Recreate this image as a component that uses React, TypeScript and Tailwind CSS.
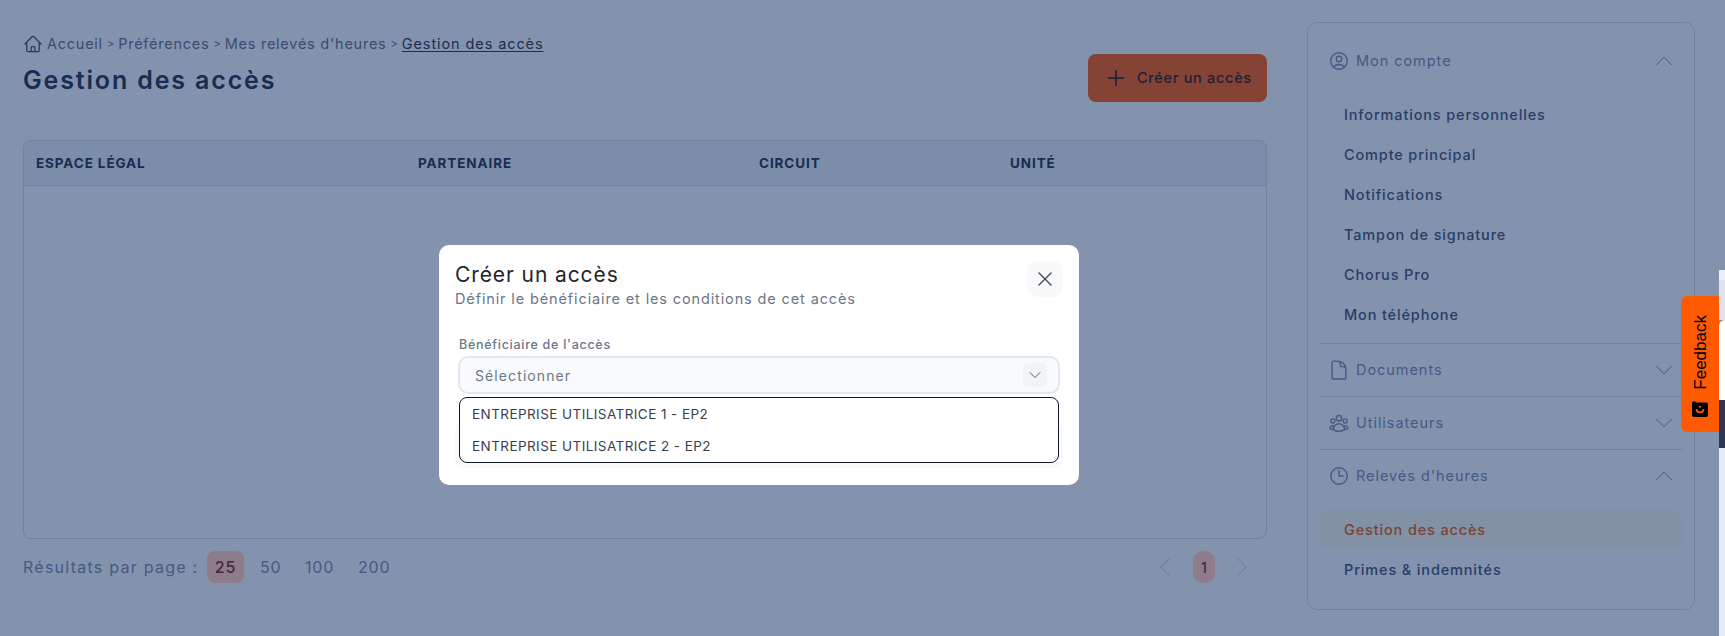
import React from "react";
import {
  HiOutlineHome,
  HiOutlineUserCircle,
  HiOutlineDocument,
  HiOutlineUserGroup,
  HiOutlineClock,
  HiOutlineChevronUp,
  HiOutlineChevronDown,
  HiOutlineChevronLeft,
  HiOutlineChevronRight,
  HiOutlinePlus,
  HiOutlineXMark,
} from "react-icons/hi2";

function Section({
  icon,
  title,
  open,
  items,
  last,
}: {
  icon: React.ReactNode;
  title: string;
  open: boolean;
  items?: { label: string; active?: boolean }[];
  last?: boolean;
}) {
  return (
    <div className={last ? "" : "border-b border-[#71829f]"}>
      <div className="flex h-[52px] items-center pr-[6px] pl-[8px] text-[#465a7f]">
        <span className="flex w-[22px] justify-center text-[22px]">{icon}</span>
        <span className="ml-[6px] text-[14.5px] tracking-[0.95px]">{title}</span>
        <span className="ml-auto">
          {open ? (
            <HiOutlineChevronUp size={24} strokeWidth={1} />
          ) : (
            <HiOutlineChevronDown size={24} strokeWidth={1} />
          )}
        </span>
      </div>
      {open && (
        <div className="pt-2 pb-2">
          {items!.map((it) => (
            <div
              key={it.label}
              className={
                it.active
                  ? "flex h-10 items-center rounded-[8px] bg-[#8291a5] pb-[1px] pl-6 text-[14.5px] font-medium tracking-[0.85px] text-[#7a4336]"
                  : "flex h-10 items-center pb-[1px] pl-6 text-[14.5px] font-medium tracking-[0.85px] text-[#2a3d64]"
              }
            >
              {it.label}
            </div>
          ))}
        </div>
      )}
    </div>
  );
}

function FeedbackLogo() {
  return (
    <svg width="16" height="16" viewBox="0 0 16 16">
      <path d="M0 1 L3 0 L3.5 1.5 H14 a2 2 0 0 1 2 2 V14 a2 2 0 0 1 -2 2 H2 a2 2 0 0 1 -2 -2 Z" fill="#000" />
      <path d="M4.5 8 C4.5 12.5 11.5 12.5 11.5 8" fill="none" stroke="#ff5a00" strokeWidth="1.8" />
      <rect x="7" y="5" width="2" height="1.5" fill="#ff5a00" />
    </svg>
  );
}

function Sep() {
  return <span className="mx-[4px] text-[11px] tracking-normal">&gt;</span>;
}

export default function App() {
  return (
    <div
      className="relative flex h-[636px] w-[1725px] overflow-hidden bg-[#8393ae]"
      style={{ fontFamily: "Inter, 'Noto Sans', sans-serif" }}
    >
      <div className="ml-[23px] flex w-[1244px] flex-col">
        <div className="flex h-[102px] justify-between">
          <div className="pt-[34px]">
            <div className="flex h-5 items-center text-[14.5px] tracking-[0.75px] text-[#3b4b6c]">
              <HiOutlineHome size={20} className="mr-[4px] text-[#2a3a5c]" />
              <span>Accueil</span>
              <Sep />
              <span>Préférences</span>
              <Sep />
              <span>Mes relevés d'heures</span>
              <Sep />
              <span className="tracking-[0.9px] text-[#1c2d50] underline underline-offset-2">Gestion des accès</span>
            </div>
            <h1 className="mt-[10px] h-8 text-[25px] leading-8 font-semibold tracking-[1.85px] text-[#1a2c4f]">
              Gestion des accès
            </h1>
          </div>
          <button className="mt-[54px] flex h-12 w-[179px] items-center rounded-[8px] bg-[#854335] pl-[16px] text-[14.5px] font-medium tracking-[0.7px] text-[#1a2038]">
            <HiOutlinePlus size={24} strokeWidth={1.5} />
            <span className="ml-[9px]">Créer un accès</span>
          </button>
        </div>

        <div className="mt-[38px] h-[399px] overflow-hidden rounded-[8px] border border-[#71829f]">
          <div className="flex h-[45px] items-center border-b border-[#71829f] bg-[#7b8da9] pl-3 text-[13.5px] font-bold tracking-[0.9px] text-[#1a2c4f]">
            <div className="w-[382px]">ESPACE LÉGAL</div>
            <div className="w-[341px]">PARTENAIRE</div>
            <div className="w-[251px]">CIRCUIT</div>
            <div>UNITÉ</div>
          </div>
        </div>

        <div className="mt-3 flex h-8 items-center text-[16px] tracking-[1.25px] text-[#465a7f]">
          <span className="w-[184px]">Résultats par page :</span>
          <span className="flex h-8 w-[37px] items-center justify-center rounded-[8px] bg-[#8f7c8b] font-medium tracking-[0.8px] text-[#43283a]">25</span>
          <span className="ml-[16px] w-[20px] tracking-[0.8px]">50</span>
          <span className="ml-[25px] w-[27px] tracking-[0.8px]">100</span>
          <span className="ml-[26px] w-[30px] tracking-[0.8px]">200</span>
          <div className="ml-auto flex items-center text-[#71829f]">
            <HiOutlineChevronLeft size={26} strokeWidth={1} />
            <span className="ml-[15px] flex h-8 w-[22px] items-center justify-center rounded-[10px] bg-[#8f7c8b] text-[14px] font-medium tracking-normal text-[#3f2a3a]">1</span>
            <span className="ml-[14px]"><HiOutlineChevronRight size={26} strokeWidth={1} /></span>
            <span className="w-[12px]" />
          </div>
        </div>
      </div>

      <div className="mt-[22px] ml-[40px] h-[588px] w-[388px] rounded-[10px] border border-[#71829f] pt-3 pr-[12px] pl-[12px]">
        <Section
          icon={<HiOutlineUserCircle />}
          title="Mon compte"
          open
          items={[
            { label: "Informations personnelles" },
            { label: "Compte principal" },
            { label: "Notifications" },
            { label: "Tampon de signature" },
            { label: "Chorus Pro" },
            { label: "Mon téléphone" },
          ]}
        />
        <Section icon={<HiOutlineDocument />} title="Documents" open={false} />
        <Section icon={<HiOutlineUserGroup />} title="Utilisateurs" open={false} />
        <Section
          icon={<HiOutlineClock />}
          title="Relevés d'heures"
          open
          last
          items={[{ label: "Gestion des accès", active: true }, { label: "Primes & indemnités" }]}
        />
      </div>

      <div className="absolute top-[270px] right-0 flex h-[366px] w-[6px] flex-col">
        <div className="h-[10px] bg-[#eef0f3]" />
        <div className="h-[40px] bg-[#dfe4ec]" />
        <div className="h-[80px] rounded-tl-[6px] bg-white" />
        <div className="h-[48px] bg-[#2e3653]" />
        <div className="flex-1 bg-[#e8ecf5]" />
      </div>

      <div className="absolute top-[296px] left-[1681px] flex h-[136px] w-[38px] flex-col items-center rounded-l-[6px] bg-[#ff5a00] pt-[19px]">
        <span
          className="rotate-180 text-[17px] leading-none text-black [writing-mode:vertical-rl]"
          style={{ fontFamily: "'Liberation Sans', sans-serif" }}
        >
          Feedback
        </span>
        <span className="mt-[11px]"><FeedbackLogo /></span>
      </div>

      <div className="absolute top-[245px] left-[439px] h-[240px] w-[640px] rounded-[10px] bg-white px-4 pt-4">
        <div className="flex justify-between">
          <div>
            <div className="text-[21px] leading-7 tracking-[0.9px] text-[#1f2430]">Créer un accès</div>
            <div className="text-[14.5px] leading-5 tracking-[0.87px] text-[#6b7688]">
              Définir le bénéficiaire et les conditions de cet accès
            </div>
          </div>
          <button className="flex h-9 w-9 items-center justify-center rounded-[10px] bg-[#f8f9fb] text-[#3a4256]">
            <HiOutlineXMark size={24} strokeWidth={1.25} />
          </button>
        </div>
        <div className="mt-[26px] ml-[4px] text-[12.5px] leading-5 font-medium tracking-[0.72px] text-[#6b7688]">
          Bénéficiaire de l'accès
        </div>
        <div className="relative mx-[3px] mt-[1px]">
          <div className="flex h-[38px] items-center rounded-[10px] border-2 border-[#e2e6f0] bg-[#f8fafc] pr-[11px] pl-[15px] text-[14px] tracking-[1.1px] text-[#6b7688]">
            <span>Sélectionner</span>
            <span className="ml-auto flex h-6 w-6 items-center justify-center rounded-[6px] bg-[#f1f3f5] text-[#5b6478]">
              <HiOutlineChevronDown size={16} strokeWidth={1.5} />
            </span>
          </div>
          <div className="absolute top-[41px] right-[1px] left-[1px] z-10 h-[66px] rounded-[8px] border border-[#111827] bg-white pl-3 text-[13.5px] tracking-[0.43px] text-[#3a3f4b]">
            <div className="flex h-[32px] items-center">ENTREPRISE UTILISATRICE 1 - EP2</div>
            <div className="flex h-[32px] items-center">ENTREPRISE UTILISATRICE 2 - EP2</div>
          </div>
        </div>
        <div className="mt-[29px] h-[45px] rounded-[8px] bg-[#f8f9fc]" />
      </div>
    </div>
  );
}
